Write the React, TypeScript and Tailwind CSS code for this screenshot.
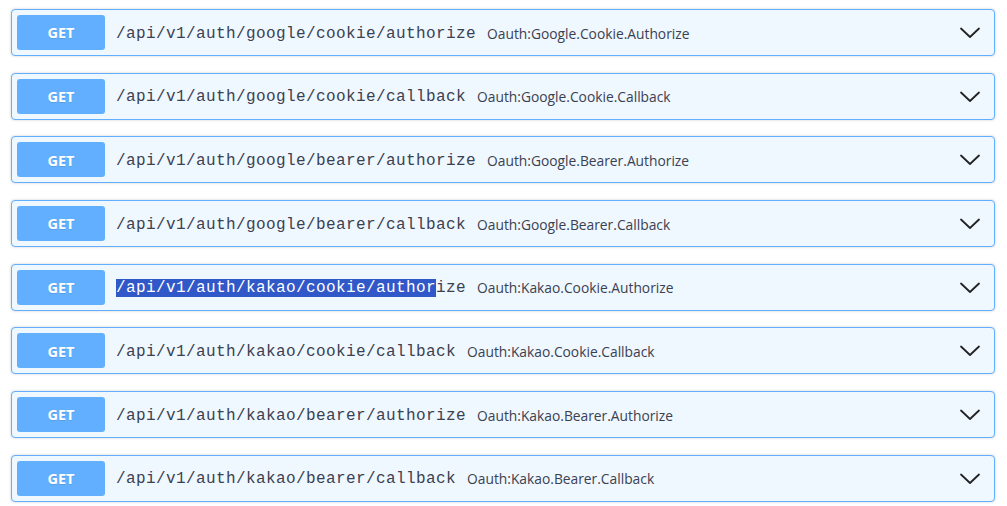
import React from "react";

const rows = [
  { path: "/api/v1/auth/google/cookie/authorize", desc: "Oauth:Google.Cookie.Authorize" },
  { path: "/api/v1/auth/google/cookie/callback", desc: "Oauth:Google.Cookie.Callback" },
  { path: "/api/v1/auth/google/bearer/authorize", desc: "Oauth:Google.Bearer.Authorize" },
  { path: "/api/v1/auth/google/bearer/callback", desc: "Oauth:Google.Bearer.Callback" },
  { path: "/api/v1/auth/kakao/cookie/authorize", desc: "Oauth:Kakao.Cookie.Authorize", sel: 32 },
  { path: "/api/v1/auth/kakao/cookie/callback", desc: "Oauth:Kakao.Cookie.Callback" },
  { path: "/api/v1/auth/kakao/bearer/authorize", desc: "Oauth:Kakao.Bearer.Authorize" },
  { path: "/api/v1/auth/kakao/bearer/callback", desc: "Oauth:Kakao.Bearer.Callback" },
];

function Chevron() {
  return (
    <svg width="22" height="14" viewBox="0 0 22 14" className="text-[#222]">
      <path d="M2 2.5 L11 11 L20 2.5" fill="none" stroke="currentColor" strokeWidth="1.8" strokeLinecap="round" strokeLinejoin="round" />
    </svg>
  );
}

export default function App() {
  return (
    <div className="w-[1007px] h-[506px] bg-white overflow-hidden pl-[11px] pr-[12px] pt-[9px] flex flex-col gap-[16.7px]">
      {rows.map((r, i) => (
        <div
          key={i}
          className="flex items-center h-[47px] shrink-0 border border-[#61affe] rounded-[4px] bg-[#eff7ff] shadow-[0_0_3px_rgba(0,0,0,0.19)] pl-[5px] pr-[13px]"
        >
          <div className="w-[88px] h-[35px] rounded-[3px] bg-[#61affe] flex items-center justify-center text-white font-bold text-[14.5px] pt-[1px] [text-shadow:0_1px_0_rgba(0,0,0,0.1)] [font-family:'Open_Sans','Noto_Sans',sans-serif]">
            GET
          </div>
          <div className="ml-[11px] pt-[3px] text-[16px] tracking-[0.4px] text-[#3b4151] [font-family:'Liberation_Mono','DejaVu_Sans_Mono',monospace] leading-[19px] whitespace-nowrap">
            {r.sel ? (
              <>
                <span className="bg-[#3158c8] text-white">{r.path.slice(0, r.sel)}</span>
                {r.path.slice(r.sel)}
              </>
            ) : (
              r.path
            )}
          </div>
          <div className="ml-[11px] text-[13.8px] text-[#3b4151] [font-family:'Open_Sans','Noto_Sans',sans-serif] whitespace-nowrap pt-[3px]">
            {r.desc}
          </div>
          <div className="ml-auto flex items-center pt-[1px]">
            <Chevron />
          </div>
        </div>
      ))}
    </div>
  );
}
